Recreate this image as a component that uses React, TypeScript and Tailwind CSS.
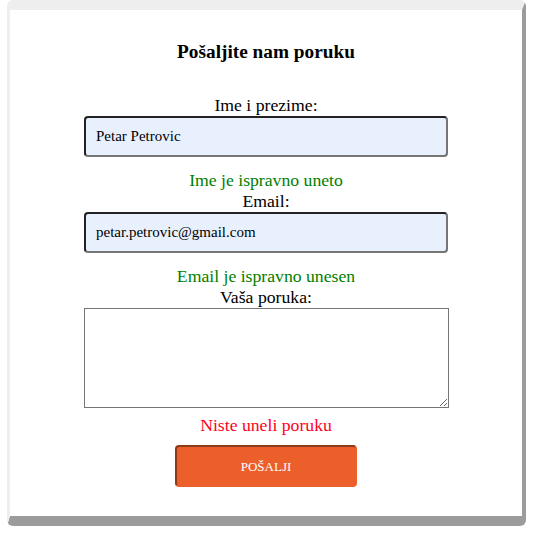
import React from 'react';

const serif = { fontFamily: '"Liberation Serif", "DejaVu Serif", serif' };

export default function App() {
  return (
    <div className="w-[534px] h-[537px] bg-white" style={serif}>
      <div className="ml-[7px] w-[519px] h-[526px] rounded-[6px] border-t-[10px] border-l-[3px] border-r-[4px] border-b-[10px] border-t-[#eeeeee] border-l-[#eeeeee] border-r-[#9b9b9b] border-b-[#9b9b9b] bg-white">
        <div className="flex flex-col items-center text-[17.7px] leading-[21px] text-black">
          <h2 className="mt-[30px] text-[19.3px] leading-[24px] font-bold">Pošaljite nam poruku</h2>

          <label className="mt-[31px]">Ime i prezime:</label>
          <input
            readOnly
            value="Petar Petrovic"
            className="w-[364px] h-[41px] rounded-[4px] border-2 border-t-[#222222] border-l-[#222222] border-r-[#767676] border-b-[#767676] bg-[#e8f0fe] px-[10px] text-[15px] text-black outline-none"
            style={serif}
          />
          <p className="mt-[13px] text-[#008000]">Ime je ispravno uneto</p>

          <label>Email:</label>
          <input
            readOnly
            value="petar.petrovic@gmail.com"
            className="w-[364px] h-[41px] rounded-[4px] border-2 border-t-[#222222] border-l-[#222222] border-r-[#767676] border-b-[#767676] bg-[#e8f0fe] px-[10px] text-[15px] text-black outline-none"
            style={serif}
          />
          <p className="mt-[13px] text-[#008000]">Email je ispravno unesen</p>

          <label>Vaša poruka:</label>
          <textarea
            className="block w-[365px] h-[100px] border border-[#767676] bg-white outline-none"
            style={serif}
          />
          <p className="mt-[7px] text-[#ff0022]">Niste uneli poruku</p>

          <button className="mt-[9px] w-[182px] h-[42px] rounded-[4px] border-2 border-t-[#8e3a18] border-l-[#8e3a18] border-r-[#ec5f2b] border-b-[#ec5f2b] bg-[#ec5f2b] text-[13px] text-white" style={serif}>
            POŠALJI
          </button>
        </div>
      </div>
    </div>
  );
}
